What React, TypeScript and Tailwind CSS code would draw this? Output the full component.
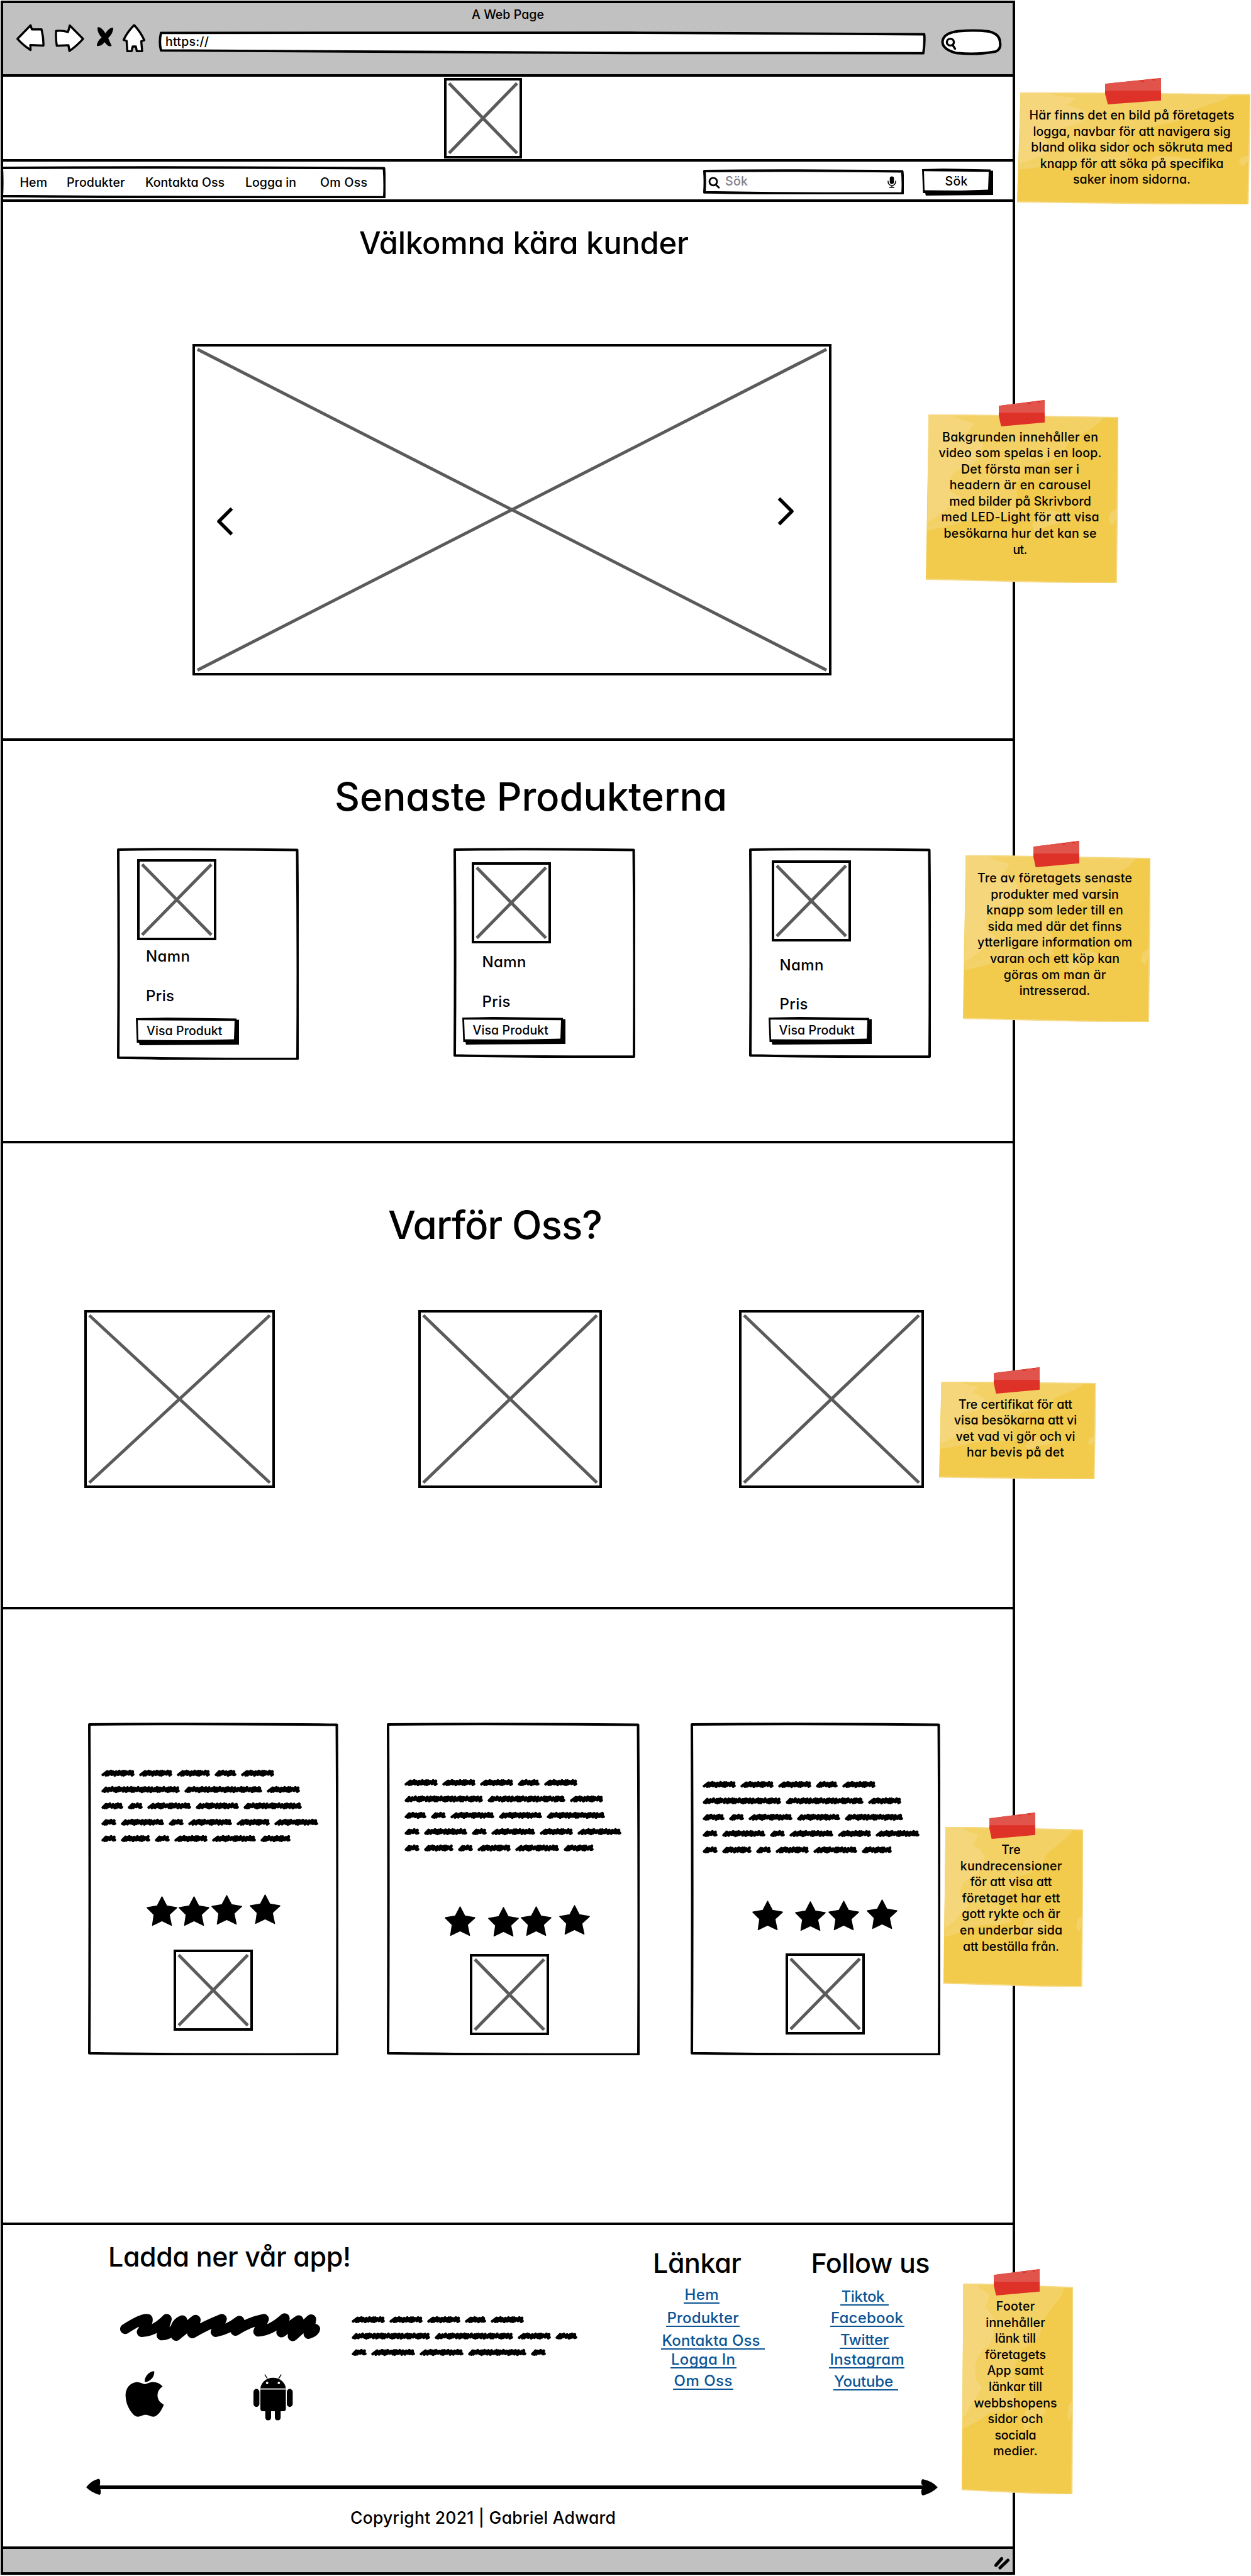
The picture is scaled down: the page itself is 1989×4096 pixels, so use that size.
import React from "react";
import { FaApple } from "react-icons/fa";

/** Single line of text whose tracking is adjusted so that it spans `w` pixels. */
function Fit({ w, className = "", children }: { w: number; className?: string; children: string }) {
  const fit = (el: HTMLSpanElement | null) => {
    if (!el) return;
    el.style.letterSpacing = "0px";
    const natural = el.getBoundingClientRect().width;
    el.style.letterSpacing = `${(w - natural) / Math.max(1, children.length - 1)}px`;
  };
  return (
    <div className={`whitespace-nowrap ${className}`} style={{ width: w }}>
      <span ref={fit} className="inline-block translate-y-[0.035em] whitespace-pre">
        {children}
      </span>
    </div>
  );
}

function SketchBox({ w, h, className = "", children }: { w: number; h: number; className?: string; children?: React.ReactNode }) {
  const d = `M2 3 Q${w * 0.4} 1.2 ${w - 2.5} 3.5 Q${w - 0.8} ${h * 0.5} ${w - 2} ${h - 1.5} Q${w * 0.4} ${h - 0.8} 2 ${h - 3.2} Q3.2 ${h * 0.5} 2 3 Z`;
  return (
    <div className={`relative shrink-0 ${className}`} style={{ width: w, height: h }}>
      <svg className="absolute inset-0" width={w} height={h} fill="#fff" stroke="#000" strokeWidth="4" strokeLinejoin="round">
        <path d={d} />
      </svg>
      <div className="relative flex h-full flex-col items-start">{children}</div>
    </div>
  );
}

function Placeholder({ w, h, className = "", children }: { w: number; h: number; className?: string; children?: React.ReactNode }) {
  return (
    <div className={`relative shrink-0 ${className}`} style={{ width: w, height: h }}>
      <svg className="absolute inset-0" width={w} height={h} fill="none">
        <rect x="2" y="2" width={w - 4} height={h - 4} stroke="#000" strokeWidth="4" fill="#fff" />
        <path d={`M8 8.5 L${w - 8} ${h - 8.5} M${w - 8} 8.5 L8 ${h - 8.5}`} stroke="#5b5b5b" strokeWidth="5" />
      </svg>
      {children}
    </div>
  );
}

function SketchButton({ w, h, className = "", children }: { w: number; h: number; className?: string; children: React.ReactNode }) {
  return (
    <div className={`relative shrink-0 ${className}`} style={{ width: w, height: h }}>
      <svg className="absolute inset-0" width={w} height={h}>
        <path d={`M0 1 L${w * 0.3} 0 L${w - 4} 1.5 L${w - 4} 3.5 L${w} 3.5 L${w} ${h - 1} L6 ${h} L5 ${h - 4} L1.5 ${h - 4} Z`} fill="#000" />
        <path d={`M3 4.2 L${w - 7} 5.2 L${w - 8} ${h - 9.5} L${w * 0.55} ${h - 8} L4 ${h - 8.5} Z`} fill="#fff" />
      </svg>
      <div className="relative">{children}</div>
    </div>
  );
}

function ScribbleWord({ w }: { w: number }) {
  let d = "M2.600 9";
  let x = 2.6;
  let i = 0;
  while (x < w - 9) {
    const loose = Math.sin(i * 1.1 + w) > 0.35;
    const up = loose ? 7 : 5;
    d += ` L${Math.min(x + up, w - 3).toFixed(1)} ${(3.8 + Math.sin(i * 2.3) * 0.7).toFixed(1)}`;
    x += loose ? 5 : 3;
    d += ` L${x.toFixed(1)} ${(9 + Math.sin(i * 1.7 + 1) * 0.9).toFixed(1)}`;
    i += 1;
  }
  d += ` L${w - 4} 4 L${w - 4.5} 9 L${w - 2.4} 8.5`;
  return (
    <svg width={w} height="13" className="shrink-0" fill="none" stroke="#000" strokeWidth="4.500" strokeLinecap="round" strokeLinejoin="round">
      <path d={d} />
    </svg>
  );
}

function Scribbles({ lines, className = "" }: { lines: number[][]; className?: string }) {
  return (
    <div className={className}>
      {lines.map((words, i) => (
        <div key={i} className="flex h-[26px] items-center gap-[7px]">
          {words.map((w, j) => (
            <ScribbleWord key={j} w={w} />
          ))}
        </div>
      ))}
    </div>
  );
}

const reviewLines = [
  [53, 53, 53, 35, 53],
  [125, 124, 53],
  [35, 24, 70, 69, 93],
  [24, 69, 24, 70, 53, 70],
  [24, 47, 24, 53, 70, 48],
];

const footerLines = [
  [53, 53, 53, 34, 53],
  [125, 125, 53, 35],
  [24, 70, 70, 93, 24],
];

function Star({ className = "" }: { className?: string }) {
  return (
    <svg width="49" height="48" className={`shrink-0 ${className}`} stroke="#000" strokeWidth="1.600" strokeLinejoin="round">
      <path d="M24.500 1 L32 15.600 L48 18.400 L36 29.500 L39.500 46.400 L24.500 39 L9.500 46.400 L12 29.500 L1 18.400 L17 15.600 Z" />
    </svg>
  );
}

const ink = "text-[19.500px] leading-[26px]";

function Note({ w, h, tape = 73, className, lines }: { w: number; h: number; tape?: number; className: string; lines: [string, number][] }) {
  return (
    <aside className={`absolute ${className}`} style={{ width: w, height: h }}>
      <svg className="absolute inset-0" width={w} height={h} viewBox="0 0 100 100" preserveAspectRatio="none">
        <path d="M1.5 0 L100 1.9 L99 100 L62 99.4 L0 97.8 L0.5 66 Z" fill="#f2ca4c" />
        <path d="M1.5 0 L92 1.8 L91 4 L88 7 L80 12.5 L74 17 L70 25 L62 29 L54 31 L50 36 L47 42 L48 57 L34 58 L22 62 L10 66 L0.6 68.5 Z" fill="#f3d164" />
        <path d="M1.5 0 L13 0.3 L18 3 L25 5 L23 9 L21 11 L26 14 L29.5 18 L28 25 L25 29 L19 31.6 L14 35 L12 40 L13 46 L18 49 L12 55 L5 61 L0.8 64 Z" fill="#f5d67a" />
        <path d="M1 66 L16 60 L34 57 L47 57 L49 59 L43 61 L26 61.5 L12 66 L1 69 Z M59 57 L66 57 L76 60 L73 63 L64 66 L57 70 L55 66 Z M96 58 L99 56 L99 61 L97 66 L95 63 Z" fill="#f4d26a" />
        <path d="M1.5 0 L100 1.9 L99 100 L62 99.4 L0 97.8" fill="none" stroke="#f6d983" strokeWidth="2" vectorEffect="non-scaling-stroke" />
      </svg>
      <svg className="absolute -top-[23px]" style={{ left: (w - tape) / 2 - 1 }} width={tape} height="42" viewBox="0 0 100 100" preserveAspectRatio="none">
        <path d="M0 22 L100 0 L100 85 L5 100 L0 60 Z" fill="#de3128" />
        <path d="M0 22 L100 0 L100 48 L0 48 Z" fill="#e0544b" />
        <path d="M62 10 L71 8 L69 14 L65 15 Z M84 5 L91 3 L90 9 L86 10 Z" fill="#de3128" />
      </svg>
      <div className="relative flex flex-col items-center pt-[23px] pr-[6px]">
        {lines.map(([text, width]) => (
          <Fit key={text} w={width} className="text-[19.500px] leading-[25.600px]">
            {text}
          </Fit>
        ))}
      </div>
    </aside>
  );
}

function BrowserBar() {
  return (
    <header className="flex h-[117px] flex-col border-b-4 border-black bg-[#c1c1c1] pt-1">
      <Fit w={115} className={`ml-[745px] ${ink}`}>A Web Page</Fit>
      <div className="mt-[3px] flex h-[54px] items-start pl-[21px]">
        <svg width="46" height="46" viewBox="26 38 46 46" fill="#fff" stroke="#000" strokeWidth="3.400" strokeLinejoin="round">
          <path d="M27.8 61.8 L48.6 40.2 L50.7 46.8 L66 46.8 Q69.5 60 69 72.5 L48.2 71.6 L48.6 79.5 Q37 72 27.8 61.8 Z" />
        </svg>
        <svg className="ml-[15px]" width="47" height="46" viewBox="87 38 47 46" fill="#fff" stroke="#000" strokeWidth="3.400" strokeLinejoin="round">
          <path d="M132 61.8 L110.9 40.5 L108.2 50.8 Q98 48 89.2 49.2 Q88.5 62 90.3 72.7 L108.8 71.9 L110.3 81 Q122 73 132 61.8 Z" />
        </svg>
        <svg className="ml-[19px]" width="28" height="46" viewBox="153 38 28 46" fill="#000">
          <path d="M155 43.5 Q161 42 167.5 53 Q174 43 180.2 44 Q180 53 172 60.5 L177.5 73 Q172 75.5 166.5 67 Q160 74.5 154 73 Q154 66 161.5 59.5 Q154.500 52 155 43.500 Z" />
        </svg>
        <svg className="ml-[14px]" width="36" height="46" viewBox="195 38 36 46" fill="#fff" stroke="#000" strokeWidth="3.400" strokeLinejoin="round">
          <path d="M213.3 40 Q223 50 229.500 64 L224.600 65.600 L226 81.400 L217.500 81.400 L216 74 L211 74 L209.200 81.400 L202.400 81.400 L201.300 65 L196.500 63.400 Q203 50 213.300 40 Z" />
        </svg>
        <div className="relative ml-[21px] h-[54px] w-[1220px]">
          <svg className="absolute inset-0" width="1220" height="54" viewBox="252 38 1220 54" fill="#fff" stroke="#000" strokeWidth="3.800" strokeLinejoin="round">
            <path d="M256 52.300 L1000 52 L1469.500 54.500 Q1470.500 70 1468 84.600 L1000 84.300 L256 80.200 Q252.500 67 256 52.300 Z" />
          </svg>
          <Fit w={69} className={`relative pt-[14px] pl-[11px] ${ink}`}>https://</Fit>
        </div>
        <svg className="ml-[23px]" width="99" height="54" viewBox="1495 38 99 54" fill="none" stroke="#000" strokeWidth="4" strokeLinejoin="round">
          <path d="M1519 84 Q1498 78 1498.500 66 Q1500 52 1525 49.500 Q1550 47.500 1572 50 Q1590 54 1590 68 Q1592 78 1583 82 Q1550 88 1519 84 Z" fill="#fff" />
          <ellipse cx="1511" cy="67" rx="5.600" ry="5.400" strokeWidth="3.400" />
          <path d="M1514.500 71.500 L1518.500 77.500" strokeWidth="3.400" strokeLinecap="round" />
        </svg>
      </div>
    </header>
  );
}

function NavBar() {
  return (
    <nav className="flex h-[64px] items-start border-b-4 border-black">
      <div className="-ml-1 mt-[7px] h-[51px] w-[612px]">
        <SketchBox w={612} h={51}>
          <div className="flex pt-[12px] pl-[30.500px] text-[19.500px] leading-[26px]">
            <Fit w={43.500}>Hem</Fit>
            <Fit w={92.500} className="ml-[31px]">Produkter</Fit>
            <Fit w={126} className="ml-[32.500px]">Kontakta Oss</Fit>
            <Fit w={81} className="ml-[33px]">Logga in</Fit>
            <Fit w={75} className="ml-[38px]">Om Oss</Fit>
          </div>
        </SketchBox>
      </div>
      <SketchBox w={319} h={40} className="mt-[12px] ml-[505px]">
        <div className="flex items-start pt-[5px] pl-[8px]">
          <svg className="mt-[7px]" width="19" height="19" fill="none" stroke="#000" strokeWidth="2.800" strokeLinecap="round">
            <circle cx="8" cy="7.800" r="6" />
            <path d="M12 12.500 L17 17.300" />
          </svg>
          <Fit w={36} className={`ml-[8px] text-[#80808c] ${ink}`}>Sök</Fit>
          <svg className="mt-[6px] ml-[222px]" width="14" height="19" fill="none" stroke="#000" strokeWidth="1.500">
            <rect x="3.700" y="0.500" width="6.600" height="12" rx="3.300" fill="#000" stroke="none" />
            <path d="M1 7.500 V9 A6 6 0 0 0 13 9 V7.500 M7 15 V18 M3 18 H11" />
          </svg>
        </div>
      </SketchBox>
      <SketchButton w={113} h={43} className="mt-[11px] ml-[28.500px]">
        <Fit w={36} className={`ml-[37px] pt-[6px] ${ink}`}>Sök</Fit>
      </SketchButton>
    </nav>
  );
}

const products = [
  { h: 337, card: "ml-[181px]", img: "mt-[18px] ml-[32px]", name: "mt-[10px] ml-[46px]", price: "mt-[33px] ml-[46px]", button: "mt-[20px] ml-[30px]" },
  { h: 333.5, card: "ml-[245.500px]", img: "mt-[23px] ml-[29.500px]", name: "mt-[14px] ml-[46px]", price: "mt-[33px] ml-[46px]", button: "mt-[10px] ml-[14px]" },
  { h: 333.5, card: "ml-[181px]", img: "mt-[19.500px] ml-[36px]", name: "mt-[22.500px] ml-[49px]", price: "mt-[32px] ml-[49px]", button: "mt-[6px] ml-[31px]" },
];

const reviews = [
  { w: 398, card: "ml-[135px]", text: "mt-[68px] ml-[20.500px]", row: "mt-[75px] ml-[92.500px]", img: "mt-[36px] ml-[136px]", stars: ["mt-[3px]", "mt-[3px] ml-[2px]", "mt-[1.500px] ml-[3.500px]", "ml-[12px]"] },
  { w: 402, card: "ml-[77px]", text: "mt-[82.500px] ml-[28px]", row: "mt-[78px] ml-[91.500px]", img: "mt-[26px] ml-[131.500px]", stars: ["mt-[1.500px]", "mt-[3px] ml-[20px]", "mt-[1.500px] ml-[3.500px]", "ml-[11.500px]"] },
  { w: 397, card: "ml-[81px]", text: "mt-[86px] ml-[19px]", row: "mt-[65px] ml-[98px]", img: "mt-[34.500px] ml-[150.500px]", stars: ["mt-[2px]", "mt-[3.500px] ml-[19px]", "mt-[2px] ml-[4px]", "ml-[11.500px]"] },
];

function FooterLink({ w, tw, className, children }: { w: number; tw: number; className: string; children: string }) {
  return (
    <a href="#" className={`block h-[30px] border-b-2 border-[#0b5595] pl-[1.500px] text-[#0b5595] ${className}`} style={{ width: w }}>
      <Fit w={tw} className="text-[24px] leading-[30px]">{children}</Fit>
    </a>
  );
}

function Android() {
  return (
    <svg width="63" height="74">
      <path d="M11 22.800 A20.300 18.400 0 0 1 51.500 22.800 Z" />
      <path d="M18 0.600 L22 7 M44.200 0.600 L40 7" stroke="#000" strokeWidth="1.400" />
      <circle cx="21.700" cy="14" r="1.900" fill="#fff" />
      <circle cx="40.300" cy="14" r="1.900" fill="#fff" />
      <path d="M11 24.400 H51.500 V55 Q51.500 59 47.500 59 H15 Q11 59 11 55 Z" />
      <rect x="0" y="23.600" width="9.400" height="28.600" rx="4.700" />
      <rect x="53" y="23.600" width="9.400" height="28.600" rx="4.700" />
      <rect x="18.800" y="52" width="9.200" height="21.500" rx="4.500" />
      <rect x="34" y="52" width="9.200" height="21.500" rx="4.500" />
    </svg>
  );
}

function Footer() {
  return (
    <footer className="h-[515px] border-b-4 border-black">
      <div className="flex h-[403px] items-start">
        <div className="ml-[169px] w-[385px] pt-[22px]">
          <Fit w={386} className="-ml-[2px] text-[43px] leading-[53px]">Ladda ner vår app!</Fit>
          <svg className="mt-[65px] ml-[17px]" width="319" height="45" fill="none" stroke="#000" strokeWidth="16" strokeLinecap="round" strokeLinejoin="round">
            <path d="M8 25.200 Q36 7 43.500 9.300 Q46 12 34.500 30 Q56 29 74 9.300 L66 35.300 Q84 34 98.700 11.500 Q84 18 89 36 L120 10.700 L114.600 32 Q135 20 161.600 9.300 L152 30 Q172 26 189.500 12.300 L183.400 28 Q205 14 228.500 9.300 L219.800 29.300 Q240 28 261.600 8.200 L256.400 30.600 L283.700 11.500 L274.500 36.600 L303.700 10 L299.600 33 Q309 30 310 25.200" />
          </svg>
          <div className="mt-[42px] ml-[25px] flex items-start">
            <FaApple className="h-[83px] w-[62px]" />
            <div className="mt-[10px] ml-[142px]"><Android /></div>
          </div>
        </div>
        <Scribbles lines={footerLines} className="w-[482px] pt-[137px]" />
        <div className="w-[251.500px] pt-[32px]">
          <Fit w={141} className="-ml-[3px] text-[43px] leading-[53px]">Länkar</Fit>
          <FooterLink w={57} tw={54} className="mt-[9.500px] ml-[46px]">Hem</FooterLink>
          <FooterLink w={117} tw={114} className="mt-[7.500px] ml-[18px]">Produkter</FooterLink>
          <FooterLink w={165} tw={156} className="mt-[6px] ml-[10px]">Kontakta Oss</FooterLink>
          <FooterLink w={105} tw={102} className="ml-[24.500px]">Logga In</FooterLink>
          <FooterLink w={96} tw={93} className="mt-[4px] ml-[29px]">Om Oss</FooterLink>
        </div>
        <div className="pt-[32px]">
          <Fit w={189} className="-ml-[3px] text-[43px] leading-[53px]">Follow us</Fit>
          <FooterLink w={77} tw={69} className="mt-[12.500px] ml-[43.500px]">Tiktok</FooterLink>
          <FooterLink w={118} tw={115} className="mt-[4.500px] ml-[27px]">Facebook</FooterLink>
          <FooterLink w={79} tw={77} className="mt-[4.500px] ml-[42px]">Twitter</FooterLink>
          <FooterLink w={120} tw={118} className="mt-[1.500px] ml-[25.500px]">Instagram</FooterLink>
          <FooterLink w={103.5} tw={94} className="mt-[4.500px] ml-[32px]">Youtube</FooterLink>
        </div>
      </div>
      <svg className="ml-[132px]" width="1354" height="27">
        <path d="M15 11 H1338 V17 H15 Z" />
        <path d="M0 14 Q8 3 20 0.500 Q23 1 22 9 L20.500 14 L23 18 Q24 25 21 26 Q8 22 0 14 Z" />
        <path d="M1354 14 Q1345 4 1330 1 Q1327 2 1328 9 L1333 13 L1328 18 Q1327 25 1330 27 Q1345 23 1354 14 Z" />
      </svg>
      <Fit w={422} className="mt-[18px] ml-[552px] text-[26.500px] leading-[32px]">Copyright 2021 | Gabriel Adward</Fit>
    </footer>
  );
}

export default function App() {
  return (
    <div className="relative h-[4096px] w-[1989px] overflow-hidden bg-white pt-px pl-px font-['Inter',sans-serif] font-[450] text-black [font-feature-settings:'cv11']">
      <main className="flex h-[4093px] w-[1613px] flex-col border-4 border-black">
        <BrowserBar />
        <section className="h-[135px] border-b-4 border-black">
          <Placeholder w={124} h={128} className="mt-[1.500px] ml-[701px]" />
        </section>
        <NavBar />
        <section className="h-[857px] border-b-4 border-black pt-[34px]">
          <Fit w={524} className="ml-[566px] text-[49px] leading-[60px]">Välkomna kära kunder</Fit>
          <Placeholder w={1016} h={527} className="mt-[131.500px] ml-[300.500px]">
            <div className="relative flex justify-between px-[38px] pt-[244px]">
              <svg className="mt-[16px]" width="27" height="45" fill="none" stroke="#000" strokeWidth="5.500" strokeLinejoin="round">
                <path d="M24.500 1.500 L4 22 L24.500 42.500" />
              </svg>
              <svg className="mr-[21px]" width="27" height="45" fill="none" stroke="#000" strokeWidth="5.500" strokeLinejoin="round">
                <path d="M2.500 1.500 L23 22 L2.500 42.500" />
              </svg>
            </div>
          </Placeholder>
        </section>
        <section className="h-[640px] border-b-4 border-black pt-[48.500px]">
          <Fit w={624} className="ml-[527px] text-[62px] leading-[76px]">Senaste Produkterna</Fit>
          <div className="mt-[45.500px] flex items-start">
            {products.map((p, i) => (
              <SketchBox key={i} w={289} h={p.h} className={p.card}>
                <Placeholder w={126} h={129} className={p.img} />
                <Fit w={70} className={`text-[24px] leading-[30px] ${p.name}`}>Namn</Fit>
                <Fit w={45} className={`text-[24px] leading-[30px] ${p.price}`}>Pris</Fit>
                <SketchButton w={164} h={44} className={p.button}>
                  <Fit w={120.5} className={`ml-[17px] pt-[7px] ${ink}`}>Visa Produkt</Fit>
                </SketchButton>
              </SketchBox>
            ))}
          </div>
        </section>
        <section className="h-[741px] border-b-4 border-black pt-[90px]">
          <Fit w={341} className="ml-[612px] text-[62px] leading-[76px]">Varför Oss?</Fit>
          <div className="mt-[98.500px] flex">
            <Placeholder w={303} h={283} className="ml-[128.500px]" />
            <Placeholder w={292} h={283} className="ml-[228.500px]" />
            <Placeholder w={294} h={283} className="ml-[217.500px]" />
          </div>
        </section>
        <section className="flex h-[979px] items-start border-b-4 border-black pt-[179.500px]">
          {reviews.map((r, i) => (
            <SketchBox key={i} w={r.w} h={529} className={r.card}>
              <Scribbles lines={reviewLines} className={r.text} />
              <div className={`flex h-[52px] items-start ${r.row}`}>
                {r.stars.map((s, j) => (
                  <Star key={j} className={s} />
                ))}
              </div>
              <Placeholder w={126} h={129} className={r.img} />
            </SketchBox>
          ))}
        </section>
        <Footer />
        <div className="flex flex-1 justify-end bg-[#c1c1c1] pt-[12px] pr-[3px]">
          <svg width="28" height="22" stroke="#000" strokeWidth="5" strokeLinecap="round">
            <path d="M4.500 14 L13.500 3.500 M11 18 L23.500 6" />
          </svg>
        </div>
      </main>

      <Note w={371} h={178} tape={89} className="top-[147px] left-[1617px]" lines={[["Här finns det en bild på företagets", 326], ["logga, navbar för att navigera sig", 314], ["bland olika sidor och sökruta med", 320.5], ["knapp för att söka på specifika", 291.5], ["saker inom sidorna.", 187]]} />
      <Note w={306} h={268} className="top-[658.500px] left-[1472px]" lines={[["Bakgrunden innehåller en", 248], ["video som spelas i en loop.", 259], ["Det första man ser i", 188], ["headern är en carousel", 224.5], ["med bilder på Skrivbord", 225.5], ["med LED-Light för att visa", 251], ["besökarna hur det kan se", 243], ["ut.", 23]]} />
      <Note w={298} h={265} className="top-[1360px] left-[1531px]" lines={[["Tre av företagets senaste", 246], ["produkter med varsin", 203.5], ["knapp som leder till en", 217.5], ["sida med där det finns", 213], ["ytterligare information om", 246], ["varan och ett köp kan", 206], ["göras om man är", 162.5], ["intresserad.", 112.5]]} />
      <Note w={249} h={155} className="top-[2196.500px] left-[1493px]" lines={[["Tre certifikat för att", 181], ["visa besökarna att vi", 195.5], ["vet vad vi gör och vi", 190], ["har bevis på det", 155]]} />
      <Note w={222} h={254} className="top-[2905px] left-[1499.500px]" lines={[["Tre", 30.5], ["kundrecensioner", 161.5], ["för att visa att", 130], ["företaget har ett", 156], ["gott rykte och är", 156.5], ["en underbar sida", 163], ["att beställa från.", 153]]} />
      <Note w={177} h={335} className="top-[3631px] left-[1529px]" lines={[["Footer", 61.5], ["innehåller", 94.5], ["länk till", 65], ["företagets", 97], ["App samt", 90], ["länkar till", 85], ["webbshopens", 132], ["sidor och", 88], ["sociala", 66], ["medier.", 70.5]]} />
    </div>
  );
}
